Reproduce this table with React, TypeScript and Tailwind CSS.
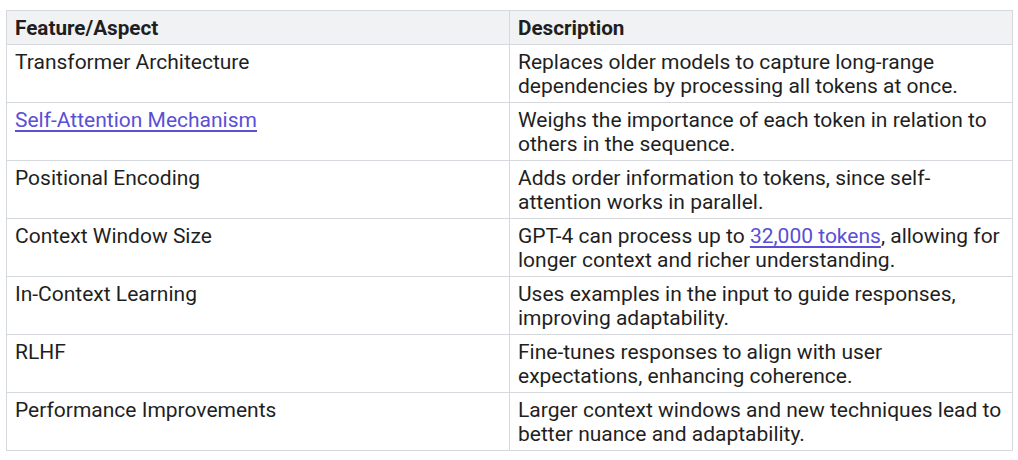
import React from "react";

const rows: { f: React.ReactNode; d: React.ReactNode }[] = [
  { f: "Transformer Architecture", d: "Replaces older models to capture long-range dependencies by processing all tokens at once." },
  {
    f: <a href="#" className="text-[#5a4fd6] underline underline-offset-[3px]">Self-Attention Mechanism</a>,
    d: "Weighs the importance of each token in relation to others in the sequence.",
  },
  { f: "Positional Encoding", d: "Adds order information to tokens, since self-attention works in parallel." },
  {
    f: "Context Window Size",
    d: (
      <>
        GPT-4 can process up to{" "}
        <a href="#" className="text-[#5a4fd6] underline underline-offset-[3px]">32,000 tokens</a>, allowing for longer context and richer understanding.
      </>
    ),
  },
  { f: "In-Context Learning", d: "Uses examples in the input to guide responses, improving adaptability." },
  { f: "RLHF", d: "Fine-tunes responses to align with user expectations, enhancing coherence." },
  { f: "Performance Improvements", d: "Larger context windows and new techniques lead to better nuance and adaptability." },
];

export default function App() {
  return (
    <div className="bg-white w-[1018px] h-[460px] pt-[10px] pl-[6px]" style={{ fontFamily: "Roboto, 'Liberation Sans', sans-serif" }}>
      <table className="border-collapse w-[1007px] text-[21px] leading-[24px] text-[#1f1f1f] table-fixed">
        <colgroup>
          <col className="w-[503px]" />
          <col />
        </colgroup>
        <thead>
          <tr className="bg-[#f0f2f4]">
            <th className="border border-[#d5d8dc] text-left font-bold text-[20.7px] px-[8px] py-[4.5px]">Feature/Aspect</th>
            <th className="border border-[#d5d8dc] text-left font-bold text-[20.7px] px-[8px] py-[4.5px]">Description</th>
          </tr>
        </thead>
        <tbody>
          {rows.map((r, i) => (
            <tr key={i}>
              <td className="border border-[#d5d8dc] align-top px-[8px] py-[4.5px] h-[58px]">{r.f}</td>
              <td className="border border-[#d5d8dc] align-top px-[8px] py-[4.5px] h-[58px]">{r.d}</td>
            </tr>
          ))}
        </tbody>
      </table>
    </div>
  );
}
